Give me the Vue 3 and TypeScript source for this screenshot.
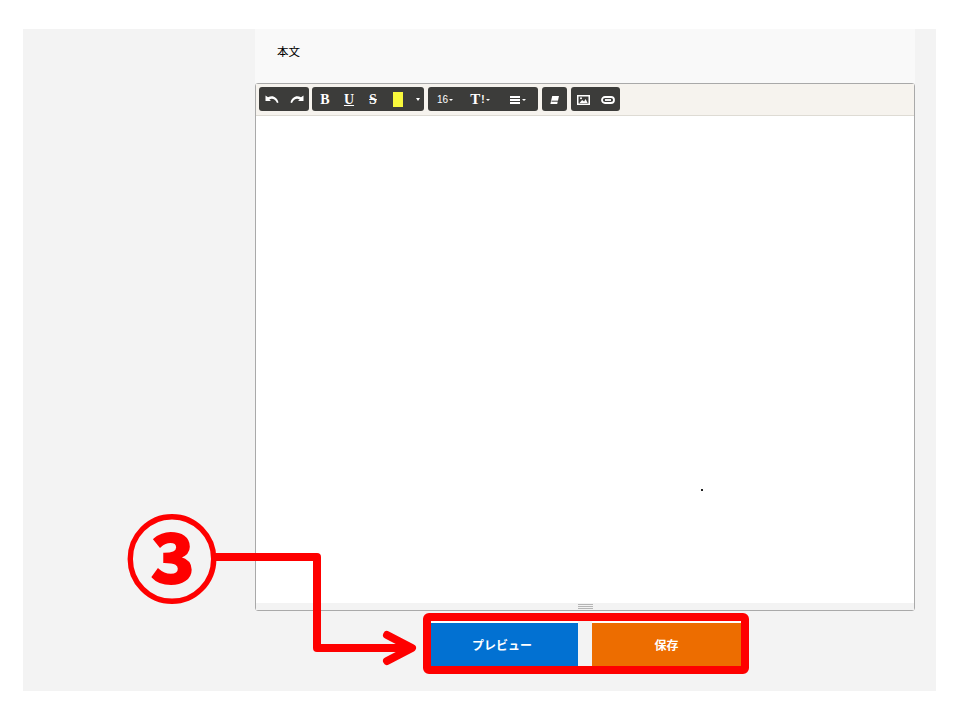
<template>
  <div class="page">
    <div class="panel">
      <div class="content">
        <div class="label-row">本文</div>

        <div class="editor">
          <div class="toolbar">
            <div class="btn-group">
              <button class="tool w25" type="button" aria-label="undo">
                <svg width="14" height="9" viewBox="0 0 14 9"><path d="M.5 .5v5.500h5.500L4.300 4.400C7 3 10.200 3.800 12 8l1.500-.6C12 2 7.500-.4 3 2.300z" fill="#fff" /></svg>
              </button>
              <button class="tool w25" type="button" aria-label="redo">
                <svg width="14" height="9" viewBox="0 0 14 9"><path d="M13.500 .5v5.500H8l1.700-1.600C7 3 3.800 3.800 2 8L.5 7.400C2 2 6.500-.4 11 2.300z" fill="#fff" /></svg>
              </button>
            </div>

            <div class="btn-group">
              <button class="tool w24 serif shift" type="button">B</button>
              <button class="tool w24 serif under shift" type="button">U</button>
              <button class="tool w24 serif strike shift" type="button">S</button>
              <button class="tool w27" type="button" aria-label="highlight">
                <span class="swatch"></span>
              </button>
              <button class="tool w13" type="button" aria-label="highlight menu">
                <span class="caret"></span>
              </button>
            </div>

            <div class="btn-group">
              <button class="tool w34 size" type="button">16<span class="caret small"></span></button>
              <button class="tool w36 serif height" type="button">T<span class="bang">!</span><span class="caret small"></span></button>
              <button class="tool w40" type="button" aria-label="align">
                <svg width="10" height="8" viewBox="0 0 10 8"><path d="M0 0h10v2H0zM0 3h10v2H0zM0 6h10v2H0z" fill="#fff" /></svg>
                <span class="caret small"></span>
              </button>
            </div>

            <div class="btn-group">
              <button class="tool w25" type="button" aria-label="eraser">
                <svg width="9" height="8" viewBox="0 0 9 8"><path d="M2.200 0H9L7.200 8H.4z" fill="#fff" /><path d="M1.500 5.200h6.500" stroke="#3c3c3a" stroke-width="1" /></svg>
              </button>
            </div>

            <div class="btn-group">
              <button class="tool w24" type="button" aria-label="image">
                <svg width="13" height="10" viewBox="0 0 13 10"><path fill-rule="evenodd" d="M0 0h13v10H0zM1.500 1.500v7h10v-7z" fill="#fff" /><path d="M2.500 8l2.600-3 2 1.600L8.600 4l2 4z" fill="#fff" /><circle cx="4" cy="3.200" r="1" fill="#fff" /></svg>
              </button>
              <button class="tool w25" type="button" aria-label="link">
                <svg width="14" height="8" viewBox="0 0 14 8" fill="none" stroke="#fff" stroke-width="1.800"><rect x="1" y="1" width="12" height="6" rx="3" /><path d="M4 4h6" /></svg>
              </button>
            </div>
          </div>

          <div class="body">
            <span class="speck"></span>
          </div>

          <div class="statusbar">
            <span class="grip"></span>
          </div>
        </div>

        <div class="actions">
          <button class="action preview" type="button">プレビュー</button>
          <button class="action save" type="button">保存</button>
        </div>
      </div>
    </div>

    <!-- 注釈: 赤い枠と矢印 -->
    <svg class="annotation" width="960" height="720" viewBox="0 0 960 720">
      <text class="marker" x="172" y="594" text-anchor="middle">③</text>
      <g fill="none" stroke="#fe0000" stroke-width="8" stroke-linejoin="round" stroke-linecap="round">
        <path d="M216 557H317V648H410" />
        <path d="M387 635L412 648L387 661" />
        <rect x="427" y="617" width="318" height="53" rx="2" />
      </g>
    </svg>
  </div>
</template>

<script setup lang="ts">
</script>

<style>
html,
body {
  margin: 0;
  background: #fff;
}
</style>

<style scoped>
.page {
  position: relative;
  width: 960px;
  height: 720px;
  box-sizing: border-box;
  padding: 29px 24px 29px 23px;
  overflow: hidden;
  font-family: "Liberation Sans", "Noto Sans CJK JP", sans-serif;
}

.panel {
  display: flex;
  justify-content: flex-end;
  height: 662px;
  padding-right: 21px;
  background: #f3f3f3;
}

.content {
  display: flex;
  flex-direction: column;
  width: 660px;
}

.label-row {
  height: 54px;
  box-sizing: border-box;
  padding: 15px 0 0 22px;
  background: #f9f9f9;
  color: #000;
  font-size: 11.500px;
  line-height: 17px;
}

.editor {
  display: flex;
  flex-direction: column;
  height: 528px;
  box-sizing: border-box;
  border: 1px solid #a9a9a9;
  border-radius: 3px;
  background: #fff;
}

.toolbar {
  display: flex;
  gap: 3px;
  height: 32px;
  box-sizing: border-box;
  padding: 3px 0 0 3px;
  border-bottom: 1px solid #dedbd4;
  background: #f6f3ee;
}

.btn-group {
  display: flex;
  height: 24px;
  border-radius: 3px;
  background: #3c3c3a;
}

.btn-group:nth-child(n + 3) {
  margin-left: 1px;
}

.tool {
  display: flex;
  align-items: center;
  justify-content: center;
  gap: 2px;
  height: 24px;
  padding: 1px 0 0;
  border: 0;
  background: transparent;
  color: #fff;
  font-size: 12px;
  font-weight: 700;
}

.w13 { width: 13px; }
.w24 { width: 24px; }
.w25 { width: 25px; }
.w27 { width: 27px; }
.w34 { width: 34px; }
.w36 { width: 36px; }
.w40 { width: 40px; }

.serif {
  font-family: "Liberation Serif", serif;
  font-size: 14px;
}

.shift {
  padding-left: 2px;
}

.under {
  text-decoration: underline;
}

.strike {
  text-decoration: line-through;
}

.height {
  gap: 1px;
  font-size: 15px;
}

.bang {
  font-family: "Liberation Sans", sans-serif;
  font-size: 10px;
}

.size {
  font-size: 10px;
  font-weight: 400;
  gap: 1px;
}

.swatch {
  display: block;
  width: 10px;
  height: 15px;
  background: #f8f83c;
}

.caret {
  display: block;
  width: 0;
  height: 0;
  border-top: 3px solid #fff;
  border-left: 2.500px solid transparent;
  border-right: 2.500px solid transparent;
}

.caret.small {
  border-top-width: 2.500px;
  border-left-width: 2px;
  border-right-width: 2px;
}

.body {
  position: relative;
  flex: 1;
}

.speck {
  position: absolute;
  left: 445px;
  top: 373px;
  width: 2px;
  height: 2px;
  background: #222;
}

.statusbar {
  display: flex;
  justify-content: center;
  height: 7px;
  padding-top: 1px;
  box-sizing: border-box;
  background: #f3f3f3;
}

.grip {
  display: block;
  width: 15px;
  height: 5px;
  border-top: 1px solid #b5b5b5;
  border-bottom: 1px solid #b5b5b5;
  background: linear-gradient(#b5b5b5, #b5b5b5) center / 100% 1px no-repeat;
  box-sizing: border-box;
}

.actions {
  display: flex;
  gap: 14px;
  margin: 10px 0 0 176px;
}

.action {
  height: 45px;
  padding: 0;
  border: 0;
  border-top: 2px solid #fff;
  color: #fff;
  font-family: inherit;
  font-size: 12px;
  font-weight: 700;
}

.preview {
  width: 147px;
  padding-right: 5px;
  background: #0271d2;
}

.save {
  width: 149px;
  background: #ed6d00;
}

.annotation {
  position: absolute;
  left: 0;
  top: 0;
  pointer-events: none;
}

.marker {
  fill: #fe0000;
  stroke: #fe0000;
  stroke-width: 2px;
  font-family: "Noto Sans CJK JP", sans-serif;
  font-size: 92px;
  font-weight: 700;
}
</style>
